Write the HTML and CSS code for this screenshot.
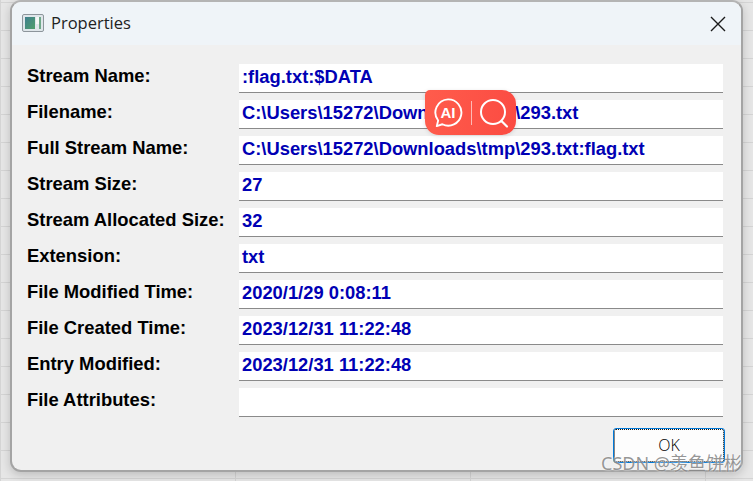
FILE: index.html
```html
<!DOCTYPE html>
<html lang="en">
<head>
<meta charset="utf-8">
<title>Properties</title>
<link rel="stylesheet" href="styles.css">
</head>
<body>
<div class="desk">
  <div class="dialog">
    <header class="titlebar">
      <svg class="appicon" width="24" height="20" viewBox="0 0 24 20">
        <defs><linearGradient id="g" x1="0" y1="0" x2="1" y2="1"><stop offset="0" stop-color="#3f7f8f"/><stop offset="1" stop-color="#4f9f6a"/></linearGradient></defs>
        <rect x="0.5" y="0.5" width="21" height="17" rx="1.5" fill="#dfe6ea" stroke="#8d959b"/>
        <rect x="3" y="3" width="10" height="12" fill="url(#g)"/>
        <rect x="14" y="3" width="5" height="7" fill="#f4f8f6"/>
        <rect x="17" y="3" width="2" height="12" fill="#6fa98a"/>
      </svg>
      <span class="title">Properties</span>
      <svg class="close" width="16" height="16" viewBox="0 0 16 16"><path d="M1 1 L15 15 M15 1 L1 15" stroke="#1a1a1a" stroke-width="1.4" fill="none"/></svg>
    </header>
    <main class="rows">
      <div class="row"><span class="label">Stream Name:</span><span class="value">:flag.txt:$DATA</span></div>
      <div class="row"><span class="label">Filename:</span><span class="value">C:\Users\15272\Downloads\tmp\293.txt</span></div>
      <div class="row"><span class="label">Full Stream Name:</span><span class="value">C:\Users\15272\Downloads\tmp\293.txt:flag.txt</span></div>
      <div class="row"><span class="label">Stream Size:</span><span class="value">27</span></div>
      <div class="row"><span class="label">Stream Allocated Size:</span><span class="value">32</span></div>
      <div class="row"><span class="label">Extension:</span><span class="value">txt</span></div>
      <div class="row"><span class="label">File Modified Time:</span><span class="value">2020/1/29 0:08:11</span></div>
      <div class="row"><span class="label">File Created Time:</span><span class="value">2023/12/31 11:22:48</span></div>
      <div class="row"><span class="label">Entry Modified:</span><span class="value">2023/12/31 11:22:48</span></div>
      <div class="row"><span class="label">File Attributes:</span><span class="value"></span></div>
    </main>
    <footer class="actions"><button class="ok" type="button">OK</button></footer>
  </div>
  <div class="popup">
    <svg width="30" height="32" viewBox="0 0 32 34"><path d="M16 2.5 A14 14 0 1 1 10 29 L4 31 L5.5 25 A14 14 0 0 1 16 2.5 Z" fill="none" stroke="#fff" stroke-width="2" stroke-linejoin="round"/><text x="16" y="22" class="ai">AI</text></svg>
    <span class="sep"></span>
    <svg width="30" height="32" viewBox="0 0 30 32"><circle cx="14" cy="15" r="12" fill="none" stroke="#fff" stroke-width="2"/><path d="M23 24.5 L28 29.5" stroke="#fff" stroke-width="2.2" stroke-linecap="round"/></svg>
  </div>
  <div class="mark">CSDN @羡鱼饼彬</div>
</div>
</body>
</html>
```
FILE: styles.css
```css
* { box-sizing: border-box; }
html, body { margin: 0; padding: 0; }
.desk {
  position: relative;
  width: 753px;
  height: 481px;
  overflow: hidden;
  padding: 0 0 0 10px;
  background-color: #e6e6e6;
  background-image:
    linear-gradient(#d4d4d4 1px, transparent 1px),
    linear-gradient(90deg, #d4d4d4 1px, transparent 1px);
  background-size: 100% 28px, 235px 100%;
  background-position: 0 2px, 0 0;
}
.dialog {
  width: 733px;
  height: 472px;
  border: 2px solid #a4a4a4;
  border-top-color: #b4b4b4;
  border-radius: 11px;
  background: #f0f0f0;
  overflow: hidden;
  box-shadow: 0 3px 10px rgba(0,0,0,.18);
  display: flex;
  flex-direction: column;
}
.titlebar {
  height: 43px;
  flex: none;
  background: #eff4f8;
  display: flex;
  align-items: center;
  padding: 0 15px 2px 10px;
}
.appicon { margin-right: 5px; margin-top: 2px; }
.title {
  font: 16.5px "Open Sans", "Noto Sans", sans-serif;
  color: #222;
  flex: 1;
}
.close { margin-top: 2px; }
.rows {
  flex: none;
  display: flex;
  flex-direction: column;
  gap: 7px;
  padding: 19px 18px 0 15px;
}
.row { display: flex; height: 29px; }
.label {
  width: 212px;
  flex: none;
  font: bold 18.4px/24px "Liberation Sans", Arial, sans-serif;
  color: #000;
}
.value {
  flex: 1;
  background: #fff;
  border-bottom: 1px solid #8a8a8a;
  padding-left: 3px;
  font: bold 18.35px/25px "Liberation Sans", Arial, sans-serif;
  color: #0000b4;
}
.actions { display: flex; justify-content: flex-end; padding: 11px 16px 0 0; }
.ok {
  width: 112px;
  height: 35px;
  background: #fdfdfd;
  border: 1px solid #0078d7;
  border-radius: 3px;
  outline: 1px dotted #111;
  outline-offset: -2px;
  font: 300 16px "Open Sans", "Noto Sans", sans-serif;
  color: #000;
  padding: 0 0 2px;
}
.popup {
  position: absolute;
  left: 425px;
  top: 90px;
  width: 91px;
  height: 45px;
  background: linear-gradient(100deg, #ff5c4c, #fb4b42);
  border-radius: 5px 14px 14px 14px;
  box-shadow: 0 1px 4px rgba(0,0,0,.12);
  display: flex;
  align-items: center;
  padding: 0 0 0 8px;
  gap: 8px;
}
.sep { width: 1px; height: 24px; background: rgba(255,255,255,.6); }
.ai { font: bold 16px "Liberation Sans", Arial, sans-serif; fill: #fff; text-anchor: middle; }
.popup svg:last-child { margin-left: -1px; }
.mark {
  position: absolute;
  left: 601px;
  top: 452px;
  font: 18px "Noto Sans", "Noto Sans CJK SC", sans-serif;
  line-height: 22px;
  color: rgba(110,110,110,.72);
  white-space: nowrap;
  text-shadow: 0 0 2px #fff;
}
```
